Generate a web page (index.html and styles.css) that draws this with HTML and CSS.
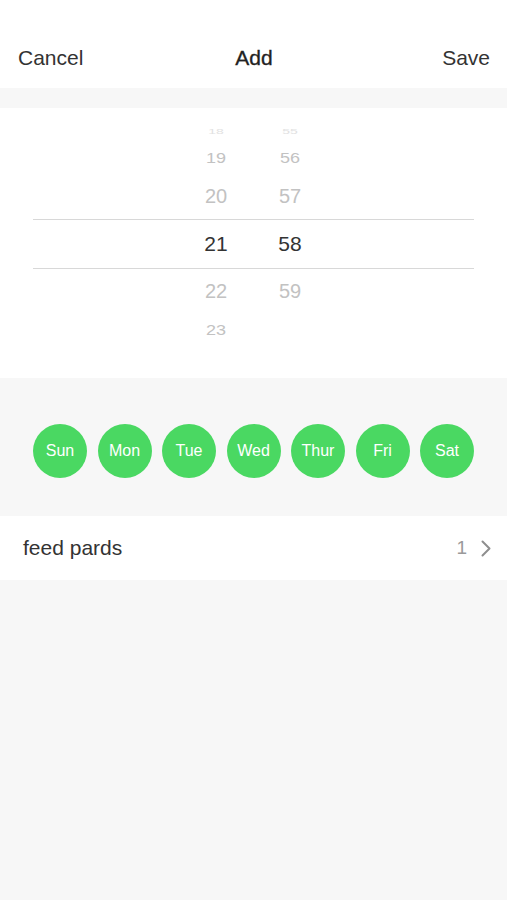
FILE: index.html
```html
<!DOCTYPE html>
<html lang="en">
<head>
    <meta charset="UTF-8">
    <meta name="viewport" content="width=device-width, initial-scale=1.0">
    <title>Add</title>
    <link rel="stylesheet" href="styles.css">
</head>
<body>

    <header class="top-bar">
        <span class="bar-btn">Cancel</span>
        <h1>Add</h1>
        <span class="bar-btn save">Save</span>
    </header>

    <div class="spacer"></div>

    <section class="picker">
        <div class="wheel-row far top">
            <span>18</span><span>55</span>
        </div>
        <div class="wheel-row near-far">
            <span>19</span><span>56</span>
        </div>
        <div class="wheel-row near">
            <span>20</span><span>57</span>
        </div>
        <div class="wheel-row selected">
            <span>21</span><span>58</span>
        </div>
        <div class="wheel-row near">
            <span>22</span><span>59</span>
        </div>
        <div class="wheel-row near-far">
            <span>23</span><span></span>
        </div>
    </section>

    <section class="days">
        <div class="day">Sun</div>
        <div class="day">Mon</div>
        <div class="day">Tue</div>
        <div class="day">Wed</div>
        <div class="day">Thur</div>
        <div class="day">Fri</div>
        <div class="day">Sat</div>
    </section>

    <div class="list-row">
        <span class="label">feed pards</span>
        <span class="value">1</span>
        <svg class="chevron" width="10" height="17" viewBox="0 0 10 17">
            <path d="M1.5 1.5 L8.5 8.5 L1.5 15.5" fill="none" stroke="#8e8e8e" stroke-width="2" stroke-linecap="round" stroke-linejoin="round"/>
        </svg>
    </div>

</body>
</html>
```

FILE: styles.css
```css
body {
    font-family: "Liberation Sans", Arial, sans-serif;
    margin: 0;
    padding: 0;
    background-color: #f7f7f7;
    color: #333;
}

.top-bar {
    background-color: white;
    height: 88px;
    display: grid;
    grid-template-columns: 1fr auto 1fr;
    align-items: center;
    padding: 28px 17px 0 18px;
    box-sizing: border-box;
}

.top-bar h1 {
    font-size: 21px;
    font-weight: normal;
    margin: 0;
    color: #222;
    -webkit-text-stroke: 0.3px #222;
}

.bar-btn {
    font-size: 21px;
    color: #333;
}

.bar-btn.save {
    justify-self: end;
}

.spacer {
    height: 20px;
}

.picker {
    background-color: white;
    height: 270px;
    padding-top: 14px;
    box-sizing: border-box;
}

.wheel-row {
    margin: 0 33px;
    display: flex;
    align-items: center;
    padding-left: 158px;
    gap: 24px;
    color: #c2c2c2;
    font-size: 20px;
}

.wheel-row span {
    width: 50px;
    text-align: center;
}

.wheel-row.far {
    height: 20px;
    font-size: 14px;
    color: #e2e2e2;
}

.wheel-row.far span {
    transform: scaleY(0.45);
}

.wheel-row.near-far {
    height: 32px;
    font-size: 18px;
}

.wheel-row.near-far span {
    transform: scaleY(0.8);
}

.wheel-row.near {
    height: 45px;
}

.wheel-row.selected {
    height: 50px;
    box-sizing: border-box;
    border-top: 1px solid #d8d8d8;
    border-bottom: 1px solid #d8d8d8;
    color: #333;
    font-size: 21px;
}

.days {
    height: 138px;
    display: flex;
    align-items: center;
    justify-content: center;
    gap: 10.5px;
    padding-top: 8px;
    box-sizing: border-box;
}

.day {
    width: 54px;
    height: 54px;
    border-radius: 50%;
    background-color: #4ad862;
    color: white;
    font-size: 16px;
    display: flex;
    align-items: center;
    justify-content: center;
}

.list-row {
    background-color: white;
    height: 64px;
    display: flex;
    align-items: center;
    padding: 0 16px 0 23px;
}

.list-row .label {
    font-size: 21px;
    color: #333;
    flex: 1;
}

.list-row .value {
    font-size: 19px;
    color: #9a9a9a;
    margin-right: 14px;
}
```
